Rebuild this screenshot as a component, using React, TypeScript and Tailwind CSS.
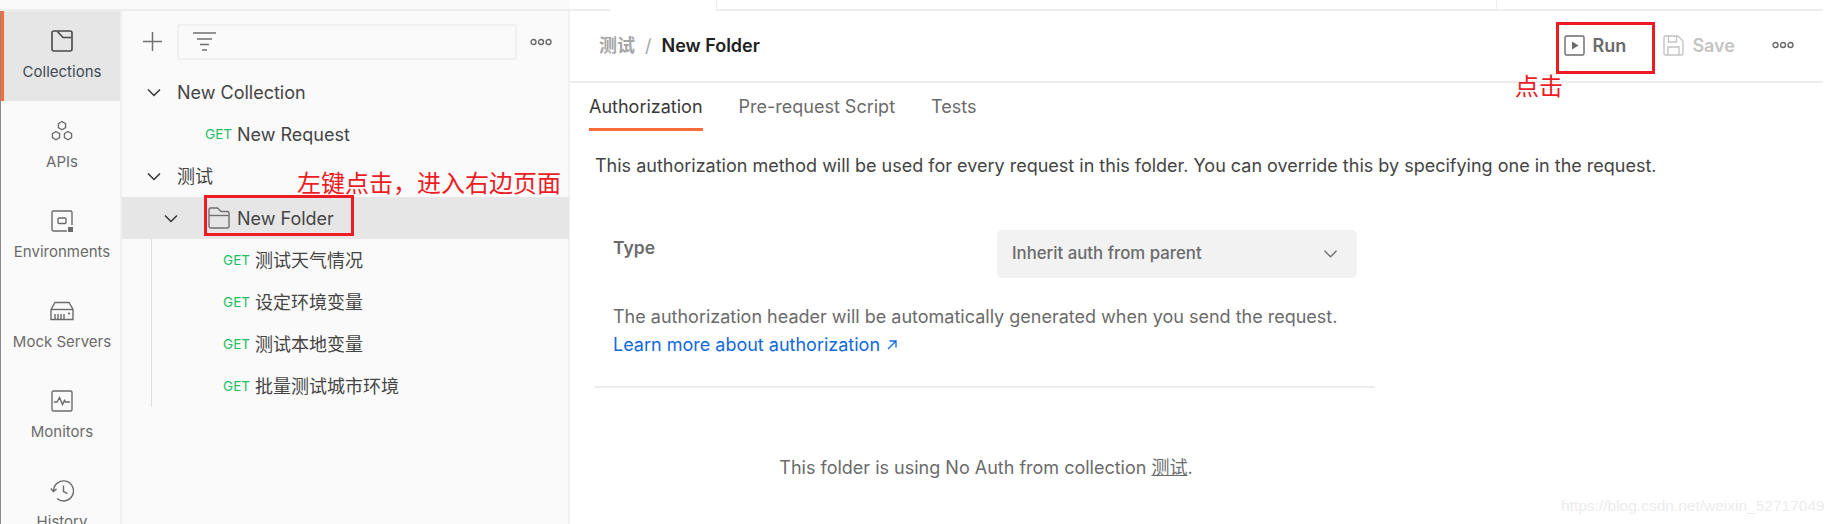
import React from "react";

const font = "font-['Inter','Noto_Sans_CJK_SC',sans-serif]";

function CollectionsIcon() {
  return (
    <svg width="22" height="22" viewBox="0 0 22 22" fill="none" stroke="#4a4a4a" strokeWidth="1.6">
      <rect x="1" y="1" width="20" height="20" rx="2" />
      <path d="M6.5 1.5 L12 7.5 H20.5" />
    </svg>
  );
}

function ApisIcon() {
  return (
    <svg width="22" height="22" viewBox="0 0 22 22" fill="none" stroke="#6b6b6b" strokeWidth="1.3">
      <path d="M11 1.5l3.6 2.1v4l-3.6 2.1-3.6-2.1v-4z" />
      <path d="M5 11.5l3.6 2.1v4L5 19.7l-3.6-2.1v-4z" />
      <path d="M17 11.5l3.6 2.1v4L17 19.7l-3.6-2.1v-4z" />
    </svg>
  );
}

function EnvironmentsIcon() {
  return (
    <svg width="22" height="22" viewBox="0 0 22 22" fill="none" stroke="#6b6b6b" strokeWidth="1.4">
      <path d="M16 21H2.5A1.5 1.5 0 0 1 1 19.5V2.5A1.5 1.5 0 0 1 2.5 1h17A1.5 1.5 0 0 1 21 2.5V15" />
      <rect x="7" y="8" width="8" height="5.5" rx="1" />
      <rect x="17" y="17" width="5" height="5" fill="#6b6b6b" stroke="none" />
    </svg>
  );
}

function MockIcon() {
  return (
    <svg width="24" height="20" viewBox="0 0 24 20" fill="none" stroke="#6b6b6b" strokeWidth="1.4">
      <path d="M1 8.5L5 1.5H19L23 8.5V18.5H1Z" />
      <path d="M1 8.5H23" />
      <path d="M5 13v5M8 13v5M11 13v5M14 13v5" />
      <circle cx="19" cy="12.5" r="1.1" fill="#6b6b6b" stroke="none" />
    </svg>
  );
}

function MonitorsIcon() {
  return (
    <svg width="22" height="22" viewBox="0 0 22 22" fill="none" stroke="#6b6b6b" strokeWidth="1.4">
      <rect x="1" y="1" width="20" height="20" rx="1.5" />
      <path d="M3 12h3l2.5-4.5 3 7 2-4 1 1.5H19" />
    </svg>
  );
}

function HistoryIcon() {
  return (
    <svg width="24" height="22" viewBox="0 0 24 22" fill="none" stroke="#6b6b6b" strokeWidth="1.4">
      <path d="M3.5 11A10 10 0 1 1 7 18.5" />
      <path d="M0.8 8.5l2.7 3 3-2.6" />
      <path d="M13.5 5.5v6l4 2.2" />
    </svg>
  );
}

function Chevron() {
  return (
    <svg width="14" height="9" viewBox="0 0 14 9" fill="none" stroke="#333" strokeWidth="1.5">
      <path d="M1 1.5l6 6 6-6" />
    </svg>
  );
}

function Dots({ color = "#6b6b6b" }: { color?: string }) {
  return (
    <svg width="22" height="8" viewBox="0 0 22 8" fill="none" stroke={color} strokeWidth="1.4">
      <circle cx="3.5" cy="4" r="2.5" />
      <circle cx="11" cy="4" r="2.5" />
      <circle cx="18.5" cy="4" r="2.5" />
    </svg>
  );
}

const navItems = [
  { label: "Collections", icon: <CollectionsIcon />, active: true },
  { label: "APIs", icon: <ApisIcon /> },
  { label: "Environments", icon: <EnvironmentsIcon /> },
  { label: "Mock Servers", icon: <MockIcon /> },
  { label: "Monitors", icon: <MonitorsIcon /> },
  { label: "History", icon: <HistoryIcon /> },
];

function Request({ name, pad }: { name: string; pad: string }) {
  return (
    <div className={`flex items-center h-[42px] ${pad}`}>
      <span className="text-[13.6px] text-[#1fbf63] w-[32px] shrink-0">GET</span>
      <span className="text-[18px] text-[#444]">{name}</span>
    </div>
  );
}

function Sidebar() {
  return (
    <div className="w-[448px] bg-[#fafafa] border-r-2 border-[#f0f0f0] flex flex-col">
      <div className="flex items-center h-[60px] pt-[1px]">
        <div className="w-[55px] flex justify-center pl-[6px]">
          <svg width="19" height="19" viewBox="0 0 19 19" stroke="#707070" strokeWidth="1.5">
            <path d="M9.5 0v19M0 9.5h19" />
          </svg>
        </div>
        <div className="w-[340px] h-[36px] border-2 border-[#f0f0f0] rounded-[3px] flex items-center pl-[14px]">
          <svg width="23" height="19" viewBox="0 0 23 19" stroke="#707070" strokeWidth="1.4">
            <path d="M0 1h23M4 7h15M7 12.5h9M9 18h5" />
          </svg>
        </div>
        <div className="ml-[13px]">
          <Dots />
        </div>
      </div>
      <div className="flex items-center h-[42px] pl-[25px]">
        <Chevron />
        <span className="ml-[16px] text-[18px] text-[#444]">New Collection</span>
      </div>
      <Request name="New Request" pad="pl-[83px]" />
      <div className="flex items-center h-[42px] pl-[25px]">
        <Chevron />
        <span className="ml-[16px] text-[18px] text-[#444]">测试</span>
      </div>
      <div className="flex items-center h-[42px] pl-[42px] bg-[#e6e6e6] mr-[-1px]">
        <Chevron />
        <svg className="ml-[30px]" width="22" height="22" viewBox="0 0 22 22" fill="none" stroke="#707070" strokeWidth="1.4">
          <path d="M1 19V2.500A1.500 1.500 0 0 1 2.500 1h7L13 4.500h6.500A1.500 1.500 0 0 1 21 6v13a2 2 0 0 1-2 2H3a2 2 0 0 1-2-2z" />
          <path d="M1 8.500h20" />
        </svg>
        <span className="ml-[7px] text-[18px] text-[#444]">New Folder</span>
      </div>
      <div className="ml-[29px] border-l border-[#dedede] pl-[71px]">
        <Request name="测试天气情况" pad="" />
        <Request name="设定环境变量" pad="" />
        <Request name="测试本地变量" pad="" />
        <Request name="批量测试城市环境" pad="" />
      </div>
    </div>
  );
}

function Toolbar() {
  return (
    <div className="h-[72px] shrink-0 border-b-2 border-[#ededed] flex items-center pl-[29px] pr-[29px] pb-[2px]">
      <span className="text-[18px] font-semibold text-[#a6a6a6]">测试</span>
      <span className="ml-[10px] text-[18px] text-[#a6a6a6]">/</span>
      <span className="ml-[10px] text-[18px] font-semibold text-[#212121]">New Folder</span>
      <div className="ml-auto flex items-center">
        <svg width="21" height="21" viewBox="0 0 21 21" fill="none" stroke="#6b6b6b" strokeWidth="1.4">
          <rect x="1" y="1" width="19" height="19" rx="1.500" />
          <path d="M8 6.500l6.500 4-6.500 4z" fill="#6b6b6b" stroke="none" />
        </svg>
        <span className="ml-[8px] text-[18px] font-semibold text-[#6b6b6b]">Run</span>
        <svg className="ml-[37px]" width="21" height="21" viewBox="0 0 21 21" fill="none" stroke="#c4c4c4" strokeWidth="1.4">
          <path d="M1 2.500A1.500 1.500 0 0 1 2.500 1H15l5 5v12.500a1.500 1.500 0 0 1-1.500 1.500h-16A1.500 1.500 0 0 1 1 18.500z" />
          <path d="M5.500 1v6h8V1M5 20v-8h11v8" />
        </svg>
        <span className="ml-[8px] text-[18px] font-semibold text-[#c4c4c4]">Save</span>
        <div className="ml-[37px]">
          <Dots />
        </div>
      </div>
    </div>
  );
}

function Tabs() {
  return (
    <div className="flex gap-[36px] pl-[19px] h-[48px] shrink-0 text-[18px]">
      <div className="h-full flex items-center pt-[2px] border-b-[3px] border-[#ff6c37] text-[#3a3a3a]">Authorization</div>
      <div className="h-full flex items-center pb-[1px] text-[#6b6b6b]">Pre-request Script</div>
      <div className="h-full flex items-center pb-[1px] text-[#6b6b6b]">Tests</div>
    </div>
  );
}

function AuthPanel() {
  return (
    <div className="pl-[25px] text-[18px] text-[#6b6b6b]">
      <p className="mt-[24px] leading-[22px] text-[#444] whitespace-nowrap">
        This authorization method will be used for every request in this folder. You can override this by specifying one in the request.
      </p>
      <div className="w-[780px] border-b-2 border-[#ededed] mt-[53px] pb-[29px] pl-[18px]">
        <div className="flex">
          <span className="w-[384px] mt-[7px] leading-[22px] text-[17.5px] font-semibold text-[#6b6b6b]">Type</span>
          <div className="w-[360px] h-[48px] bg-[#f2f2f2] rounded-[5px] flex items-center justify-between pl-[15px] pr-[20px]">
            <span className="text-[16.8px] font-medium text-[#6b6b6b]">Inherit auth from parent</span>
            <svg width="13" height="8" viewBox="0 0 13 8" fill="none" stroke="#6b6b6b" strokeWidth="1.300">
              <path d="M0.500 0.800l6 6 6-6" />
            </svg>
          </div>
        </div>
        <p className="mt-[27px] leading-[24px] whitespace-nowrap">The authorization header will be automatically generated when you send the request.</p>
        <a className="mt-[4px] leading-[24px] text-[#0f6bdc] flex items-center gap-[7px]">
          Learn more about authorization
          <svg width="10" height="10" viewBox="0 0 10 10" fill="none" stroke="#0f6bdc" strokeWidth="1.300">
            <path d="M1 9l8-8M2.500 1H9v6.500" />
          </svg>
        </a>
      </div>
      <p className="w-[782px] mt-[68px] text-center leading-[24px]">
        This folder is using No Auth from collection <span className="underline">测试</span>.
      </p>
    </div>
  );
}

export default function App() {
  return (
    <div className={`relative w-[1841px] h-[524px] overflow-hidden bg-white flex ${font}`}>
      {/* left side */}
      <div className="w-[570px] flex flex-col shrink-0">
        <div className="h-[11px] bg-[#fafafa] border-b-2 border-[#ededed]" />
        <div className="flex-1 flex min-h-0">
          <div className="w-[122px] bg-[#fafafa] border-l border-[#8a8a8a] border-r-2 border-r-[#f0f0f0] flex flex-col shrink-0">
            {navItems.map((item) => (
              <div
                key={item.label}
                className={`h-[90px] shrink-0 flex flex-col items-center justify-center gap-[11px] pb-[2px] border-l-[3px] ${
                  item.active ? "bg-[#e6e6e6] border-[#ff6c37] text-[#3f4a55]" : "border-transparent text-[#6b6b6b]"
                }`}
              >
                <div className="h-[22px] flex items-center justify-center">{item.icon}</div>
                <span className="text-[15px] leading-[18px]">{item.label}</span>
              </div>
            ))}
          </div>
          <Sidebar />
        </div>
      </div>

      {/* right side */}
      <div className="w-[1253px] flex flex-col shrink-0">
        <div className="h-[11px] flex shrink-0">
          <div className="w-[40px] border-b-2 border-[#ededed]" />
          <div className="w-[106px]" />
          <div className="flex-1 flex border-b-2 border-[#ededed]">
            <div className="w-[781px] border-l border-r border-[#ededed]" />
          </div>
        </div>
        <Toolbar />
        <Tabs />
        <AuthPanel />
      </div>

      {/* red annotations */}
      <div className="absolute left-[204px] top-[195px] w-[150px] h-[41px] border-[3px] border-[#ed1c24]" />
      <div className="absolute left-[1556px] top-[22px] w-[99px] h-[52px] border-[3px] border-[#ed1c24]" />
      <span className="absolute left-[297px] top-[166px] text-[24px] leading-[32px] text-[#ed1c24] font-['Noto_Sans_CJK_SC',sans-serif]">左键点击，进入右边页面</span>
      <span className="absolute left-[1515px] top-[69px] text-[24px] leading-[32px] text-[#ed1c24] font-['Noto_Sans_CJK_SC',sans-serif]">点击</span>
      <span className="absolute left-[1561px] top-[497px] text-[15.500px] leading-[18px] text-[#ececec] font-['Liberation_Sans',sans-serif]">https://blog.csdn.net/weixin_52717049</span>
    </div>
  );
}
